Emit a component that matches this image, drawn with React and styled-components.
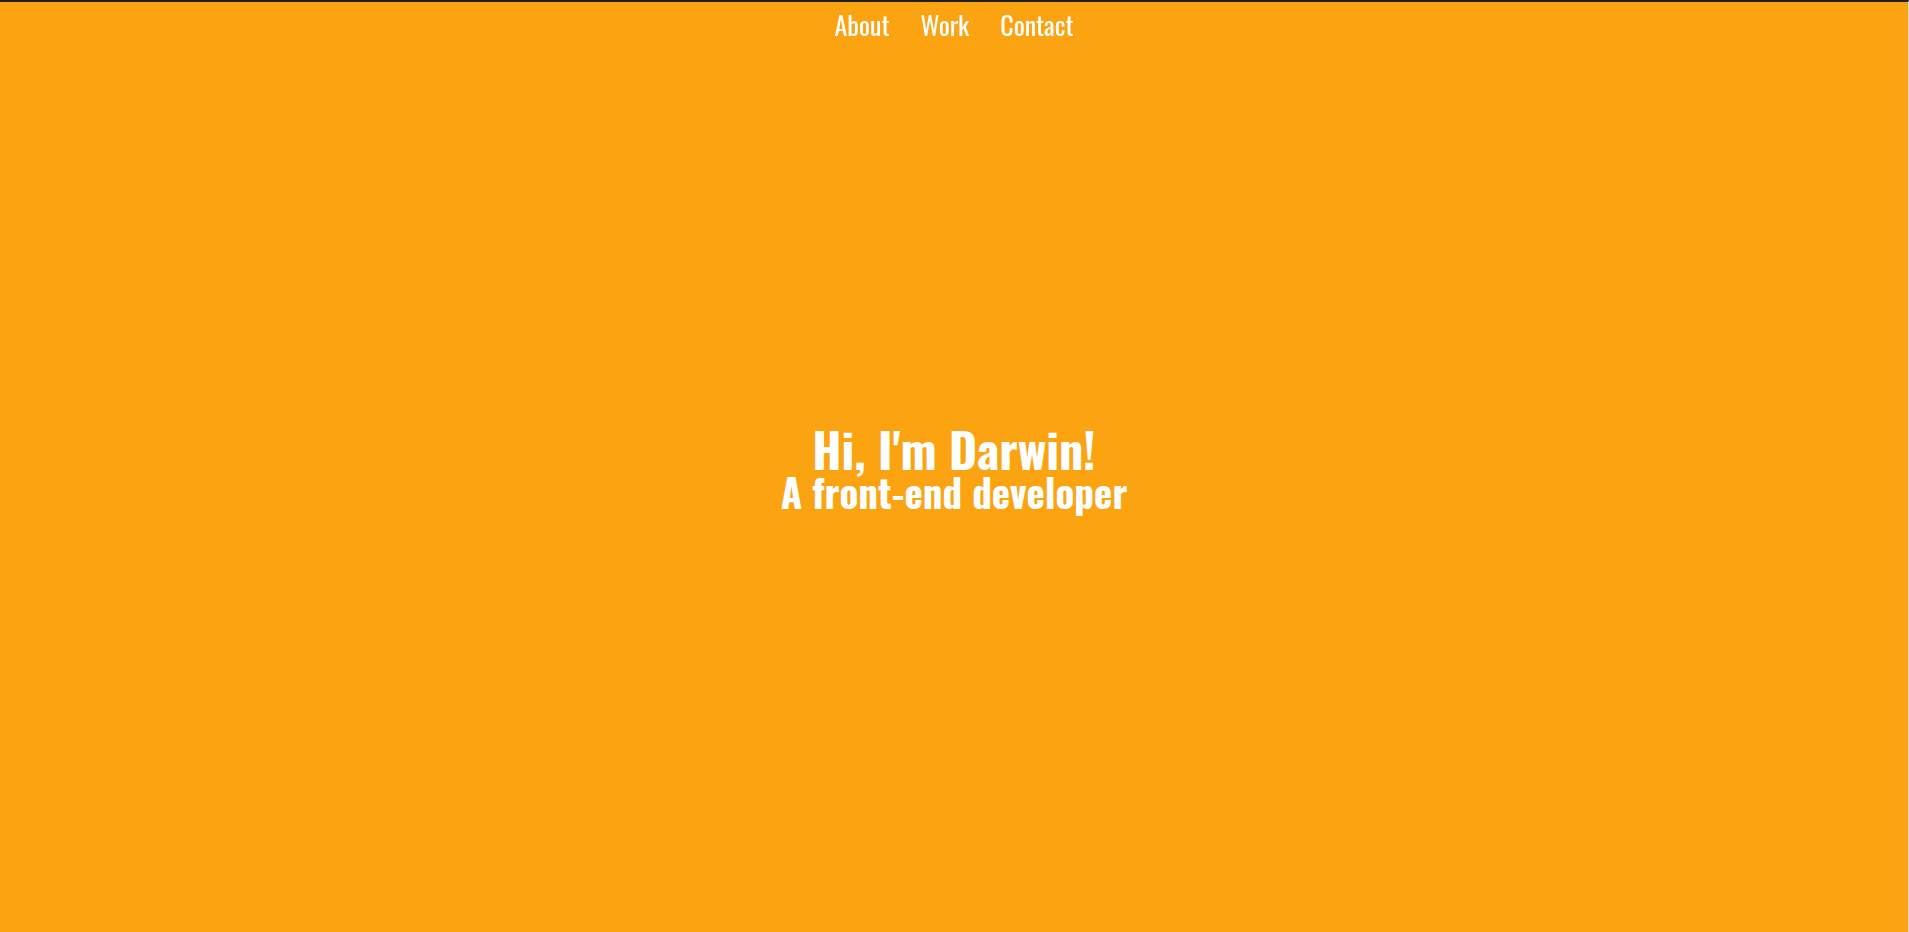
import React from 'react';
import styled, { createGlobalStyle } from 'styled-components';

const GlobalStyle = createGlobalStyle`
  html, body {
    margin: 0;
    padding: 0;
  }
  body {
    background: #fca311;
    font-family: "Oswald", "DejaVu Sans Condensed", "Liberation Sans Narrow", sans-serif;
    color: #fff;
  }
`;

const Page = styled.div`
  min-height: 100vh;
  box-sizing: border-box;
  border-top: 2px solid #1e1e1e;
  border-right: 1px solid #d4d4d4;
  display: flex;
  flex-direction: column;
`;

// fixed navbar over the hero
const Nav = styled.nav`
  position: fixed;
  top: 2px;
  left: 0;
  right: 1px;
  display: flex;
  justify-content: center;
  gap: 31px;
  padding-top: 6px;
`;

const NavLink = styled.a`
  color: #fff;
  text-decoration: none;
  font-size: 26px;
  line-height: 34px;
  cursor: pointer;
`;

const Hero = styled.section`
  flex: 1;
  display: flex;
  flex-direction: column;
  align-items: center;
  justify-content: center;
  text-align: center;
`;

const Title = styled.h1`
  margin: 0;
  font-size: ${p => p.$size}px;
  line-height: ${p => p.$lh}px;
  font-weight: 700;
`;

const App = () => {
  return (
    <>
      <GlobalStyle />
      <Page>
        <Nav>
          <NavLink>About</NavLink>
          <NavLink>Work</NavLink>
          <NavLink>Contact</NavLink>
        </Nav>
        <Hero>
          <Title $size={48} $lh={48}>Hi, I'm Darwin!</Title>
          <Title as="h2" $size={39} $lh={36}>A front-end developer</Title>
        </Hero>
      </Page>
    </>
  );
};

export default App;
